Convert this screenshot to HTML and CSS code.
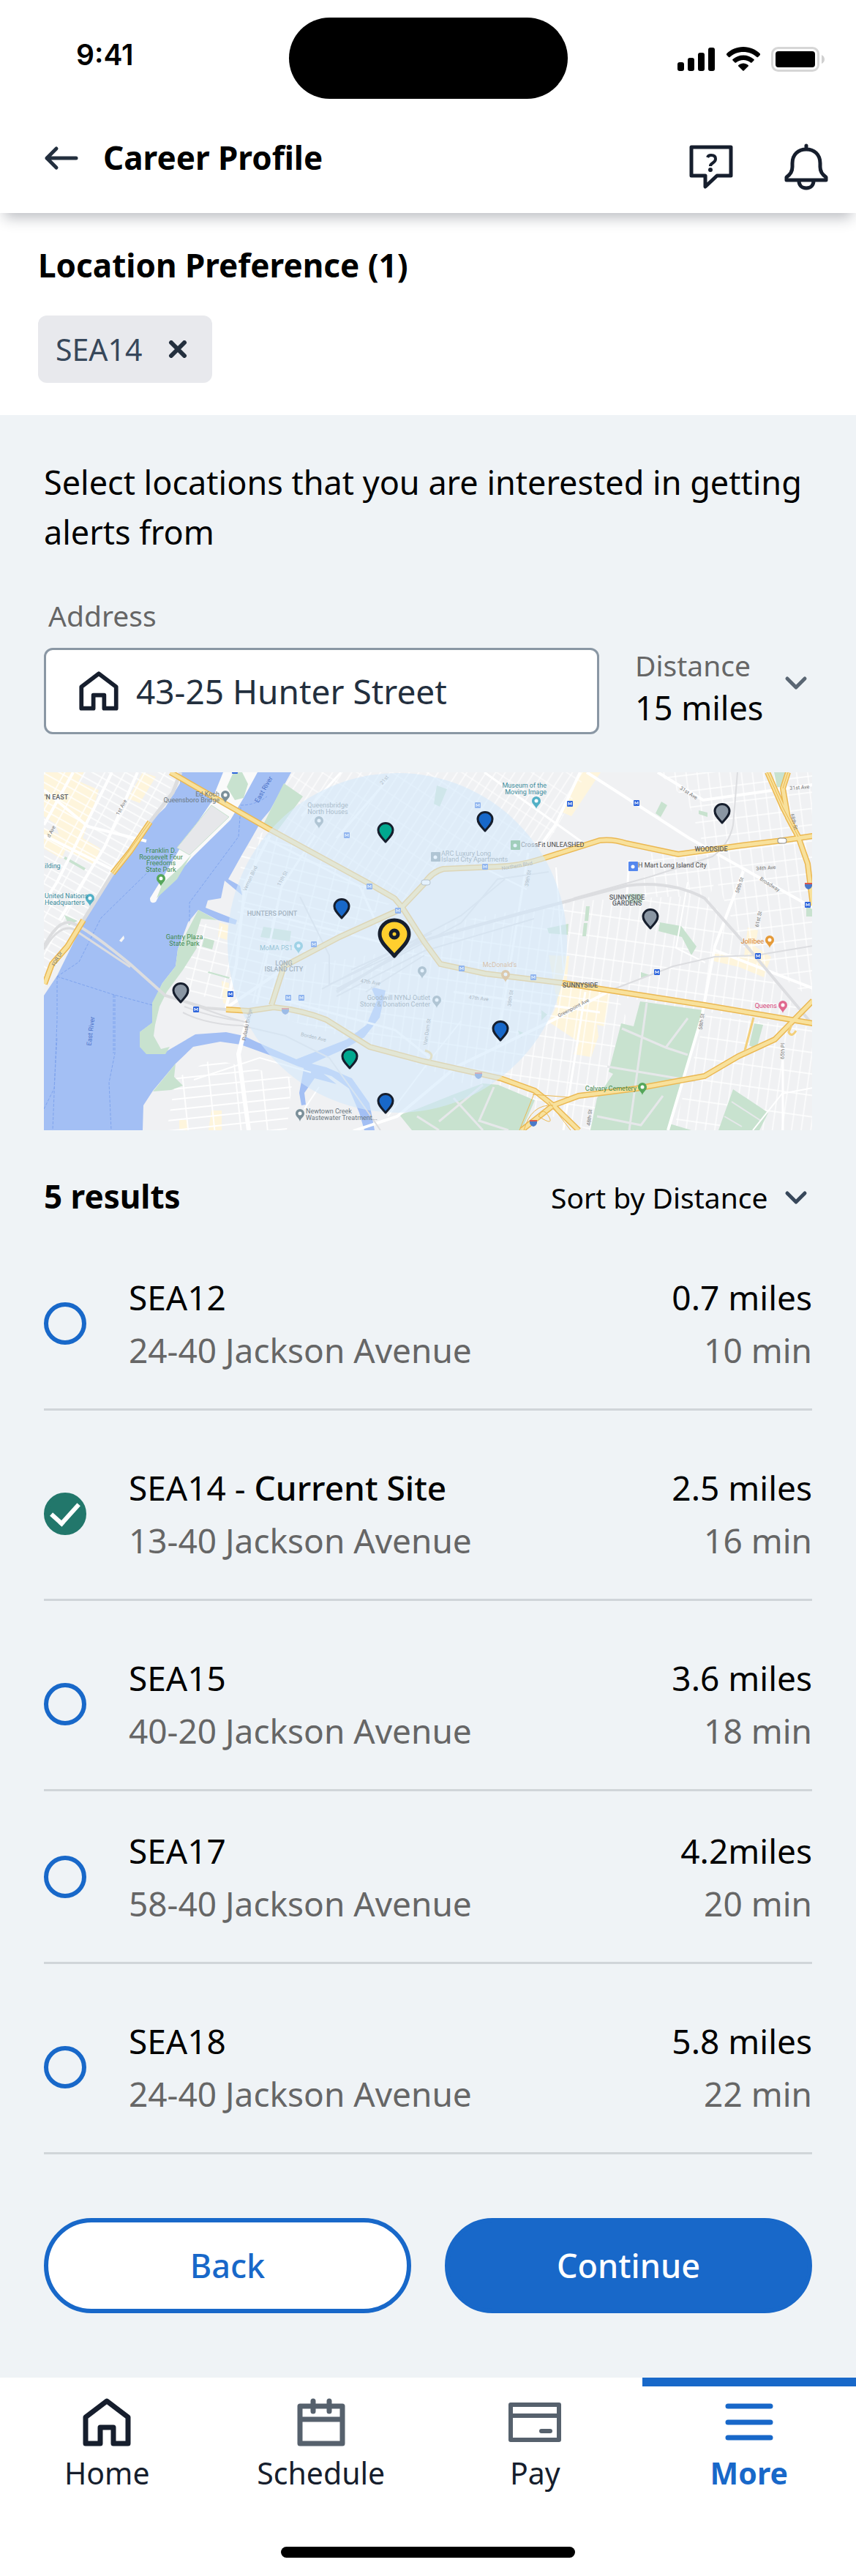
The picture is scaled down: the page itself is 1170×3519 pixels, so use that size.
FILE: index.html
```html
<!DOCTYPE html>
<html lang="en">
<head>
    <meta charset="UTF-8">
    <meta name="viewport" content="width=device-width, initial-scale=1.0">
    <title>Career Profile</title>
    <link rel="stylesheet" href="styles.css">
</head>
<body>
    <header class="header">
        <div class="status-bar">
            <div class="time">9:41</div>
            <div class="island"></div>
            <div class="status-icons">
                <svg width="52" height="34" viewBox="0 0 52 34">
                    <rect x="0" y="21" width="9" height="12" rx="3"/>
                    <rect x="14" y="15" width="9" height="18" rx="3"/>
                    <rect x="28" y="8" width="9" height="25" rx="3"/>
                    <rect x="42" y="1" width="9" height="32" rx="3"/>
                </svg>
                <svg width="46" height="34" viewBox="0 0 46 34">
                    <path d="M23 0C14 0 6 3.500 0 9.500q-.6.8 0 1.500l3 3q.8.6 1.500 0C9.500 9.500 16 7 23 7s13.500 2.500 18.500 7q.8.6 1.500 0l3-3q.6-.8 0-1.500C40 3.500 32 0 23 0z"/>
                    <path d="M23 11.500c-5.500 0-10.500 2-14.500 5.500q-.8.8 0 1.500l3 3q.8.7 1.500 0c3-2.300 6-3.500 10-3.500s7 1.200 10 3.500q.7.7 1.500 0l3-3q.8-.7 0-1.500c-4-3.500-9-5.500-14.500-5.500z"/>
                    <path d="M23 22.500c-2.600 0-4.800 1-6.700 2.500q-.6.8 0 1.500l6 6q.7.6 1.400 0l6-6q.6-.7 0-1.500c-1.900-1.500-4.100-2.500-6.700-2.500z"/>
                </svg>
                <svg width="74" height="34" viewBox="0 0 74 34">
                    <rect x="1.500" y="1.500" width="63" height="31" rx="8" fill="none" stroke="#d6d6d6" stroke-width="3"/>
                    <rect x="6" y="6" width="54" height="22" rx="4"/>
                    <path d="M69 11q4 2 4 6t-4 6z" fill="#d0d0d0"/>
                </svg>
            </div>
        </div>
        <div class="title-bar">
            <a class="back-link" href="#" aria-label="Go back">
                <svg width="48" height="36" viewBox="0 0 48 36" fill="none" stroke="#232f3e" stroke-width="5" stroke-linecap="round" stroke-linejoin="round">
                    <path d="M17 5L4 18l13 13M4 18h40"/>
                </svg>
            </a>
            <h1>Career Profile</h1>
            <button class="icon-button" aria-label="Help">
                <svg width="60" height="66" viewBox="0 0 60 66" fill="none" stroke="#161e2d" stroke-width="5" stroke-linejoin="round">
                    <path d="M3 5h54v39H38L22 59V44H3z"/>
                    <path d="M25 19q1-3 5-3 6 0 6 5 0 3-3 5T29 30v1" stroke-width="4"/>
                    <circle cx="29" cy="36" r="3" fill="#161e2d" stroke="none"/>
                </svg>
            </button>
            <button class="icon-button" aria-label="Notifications">
                <svg width="60" height="66" viewBox="0 0 60 66" fill="none" stroke="#161e2d" stroke-width="5" stroke-linejoin="round" stroke-linecap="round">
                    <path d="M30 3v5M3 50v-4c6-4 8-8 8-14v-5C11 15 19 8 30 8s19 7 19 19v5c0 6 2 10 8 14v4zM20 51c0 6 4 10 10 10s10-4 10-10"/>
                </svg>
            </button>
        </div>
    </header>

    <section class="preference">
        <h2>Location Preference (1)</h2>
        <button class="chip">
            SEA14
            <svg width="26" height="24" viewBox="0 0 26 24" stroke="#232f3e" stroke-width="6" stroke-linecap="round">
                <path d="M4 3l18 18M22 3L4 21"/>
            </svg>
        </button>
    </section>

    <main class="content">
        <p class="intro">Select locations that you are interested in getting alerts from</p>

        <div class="filters">
            <div class="address">
                <label for="address">Address</label>
                <div class="address-box">
                    <svg width="54" height="54" viewBox="0 0 66 66" fill="none" stroke="#161e2d" stroke-width="7" stroke-linejoin="round">
                        <path d="M33 4L4 26v36h20V40h18v22h20V26z"/>
                    </svg>
                    <input type="text" id="address" value="43-25 Hunter Street">
                </div>
            </div>
            <div class="distance">
                <div class="distance-field">
                    <label for="distance">Distance</label>
                    <select id="distance">
                        <option>15 miles</option>
                        <option>25 miles</option>
                    </select>
                </div>
                <svg class="chevron" width="32" height="20" viewBox="0 0 32 20" fill="none" stroke="#5a6673" stroke-width="5" stroke-linecap="round" stroke-linejoin="round">
                    <path d="M4 4l12 12L28 4"/>
                </svg>
            </div>
        </div>

        <svg class="map" viewBox="0 0 1050 489" role="img" aria-label="Map of nearby sites">
            <defs>
                <!-- street grids, one per neighbourhood -->
                <pattern id="grid-manhattan" width="24" height="11" patternUnits="userSpaceOnUse" patternTransform="rotate(29)">
                    <path d="M0 1h24M1 0v11" stroke="#fff" stroke-width="1.500"/>
                </pattern>
                <pattern id="grid-astoria" width="11" height="26" patternUnits="userSpaceOnUse" patternTransform="rotate(33)">
                    <path d="M0 1h11M1 0v26" stroke="#fff" stroke-width="1.200"/>
                </pattern>
                <pattern id="grid-hunters" width="22" height="15" patternUnits="userSpaceOnUse" patternTransform="rotate(14)">
                    <path d="M0 1h22M1 0v15" stroke="#fff" stroke-width="1.500"/>
                </pattern>
                <pattern id="grid-sunnyside" width="13" height="29" patternUnits="userSpaceOnUse" patternTransform="rotate(8)">
                    <path d="M0 1h13M1 0v29" stroke="#fff" stroke-width="1.300"/>
                </pattern>
                <pattern id="grid-woodside" width="15" height="22" patternUnits="userSpaceOnUse" patternTransform="rotate(-7)">
                    <path d="M0 1h15M1 0v22" stroke="#fff" stroke-width="1.300"/>
                </pattern>
                <pattern id="grid-greenpoint" width="36" height="14" patternUnits="userSpaceOnUse" patternTransform="rotate(-6)">
                    <path d="M0 1h36M1 0v14" stroke="#fff" stroke-width="1.800"/>
                </pattern>
                <path id="pin" d="M0-2C-5-8-10-12-10-18a10 9.500 0 0 1 20 0C10-12 5-8 0-2z" stroke="#161e2d" stroke-width="3" stroke-linejoin="round"/>
                <g id="poi">
                    <path d="M0 0C-1-5-6-6-6-11a6 6 0 0 1 12 0C6-6 1-5 0 0z"/>
                    <circle cx="0" cy="-11" r="2.500" fill="#fff"/>
                </g>
                <g id="metro">
                    <rect x="-4" y="-4" width="8" height="8" rx="1" fill="#2f66dc"/>
                    <path d="M-2 2v-4l2 3 2-3v4" fill="none" stroke="#fff"/>
                </g>
                <g id="shop">
                    <rect x="-6" y="-7" width="13" height="13" rx="1"/>
                    <circle cx="0" cy="0" r="2.500" fill="#fff"/>
                </g>
                <g id="shield">
                    <path d="M-5-4H5V0q-1 4-5 5-4-1-5-5z" fill="#4a78c8"/>
                    <path d="M-5-4H5v2H-5z" fill="#d9594c"/>
                </g>
            </defs>

            <rect width="1050" height="489" fill="#f0f1f3"/>

            <!-- commercial blocks -->
            <g fill="#fef5dc">
                <path d="M0 0h55l-8 12 28 12-12 38-10 28 24 14-8 22-40-20-14-36-15-10zM0 76l36 16-12 26-24-14z"/>
                <path d="M135 0l18 6-22 36-16-6zM240 205l12 4-2 20-12-4zM243 285l10 3-2 30-6-3z"/>
                <path d="M733 0h28l-40 60-14-6zM690 250l28 1-4 40 60 12-8 44-10-2 2 16-10 28-24-4 8-16-42-28 12-24z"/>
                <path d="M962 212l14 4-4 22 22 14-10 28-34-14-34-8-3-12 44 6z"/>
                <path d="M185 475h12v14h-12zM229 462h14v27h-18z"/>
            </g>

            <g fill="url(#grid-manhattan)"><path d="M0 0h186l-41 68-51 70-40 64-54 90z"/></g>
            <g fill="url(#grid-astoria)"><path d="M338 0h404l-54 100-68 25-74 6-56 45-190-100z"/></g>
            <g fill="url(#grid-hunters)"><path d="M270 112l32-34 180 96-154 91-17 53-112-14-10-50 14-50 60 10z"/></g>
            <g fill="url(#grid-sunnyside)">
                <path d="M540 208l177-32 190-8 50 72 94 105-150-18-278-50-80-15z"/>
                <path d="M330 268l190-30 24 26 238 38 18 42-54 145-186-69-115-48-120-36z"/>
                <path d="M905 332l146 16v141H860z"/>
            </g>
            <g fill="url(#grid-woodside)"><path d="M839 0h211v310l-94-70-40-100-36-100z"/><path d="M820 110h110l-20 60h-90z"/></g>
            <g fill="url(#grid-greenpoint)"><path d="M180 418l50-26 110 25-8 72H168z"/></g>

            <!-- water -->
            <path class="water" d="M186 0v15l-20 33-21 20-51 70-40 67-36 73-18 27v184h135l1-34 13-20 31-37 24-23 37-7 28 4 55 20 24 10 45 13 24 17 14 33 7 24h14l-7-37-24-34-35-15-20-5 45-20 27-16 21-27 8-37-20-5 8 19-14 33-27 20-69 27-55-24-17-8-24-5-42 3-41 24-11 3-24-10v-20l18-13v-27l13-27 18-23 3-23 14-37 14-17 27 14 24 6 2-6-43-17 3-10 18-3 5-24 24 20-3-13-16-9 19-34 14-24 13-23 11-13L338 0z"/>
            <path class="water" d="M356 400l-7 38 3 17 6-1-2-16 14-20 30 8-20-16z"/>
            <path d="M245 0h47l-19 35-18 30-51 50-45 50-6 12q-8 4-8-5l21-34 21-36 41-60z" fill="#fafafa"/>
            <path class="park" d="M250 20l9-20h12l8 16-6 19-12 3zM188 128l14-16-20 34-28 26 8-20z"/>
            <path d="M229 45l24 16-54 52-17-10z" fill="#e6e7ea" stroke="#c8e2cf"/>
            <path d="M106 232l-3-2 6-7 1 4z" fill="#f7f7f7"/>
            <path d="M18 279l78 25 52 14M18 279l0 60-6 150M97 304l0 80-8 40 3 65M95 304l0 80M18 279l30-20 30-60 84-82M269 45q20 0 36-12M269 48l-3 40-67 90v28" class="ferry"/>
            <path d="M0 460l14-28 4-70" class="ferry"/>

            <!-- parks -->
            <path class="park" d="M328 15l26 18-35 47-20-7zM211 188l26 14-22-2-8 25 2 15-19 30-22 30-10 20-6 25-2 15 10 18 12-3-6 10h-26l-9-10v-20l17-13v-27l14-27 18-23 3-23zM219 226l14 4-3 12-14-4zM225 272l29 8-1 2-29-8zM300 211l38 6-2 14-40-6zM149 436l31-38-2 18 12 12-16 6z"/>
            <path class="park" d="M815 313l86 12-16 60-32 104H747l9-44 22-33-6-3 17-66 17 4zM486 468l24-8 50-20 40-15 21 2 50 21-18 41H503zM942 433l48 32-12 24h-56zM842 205l29 5 21 28-7 12-13-25-32-8z"/>
            <path class="park" d="M844 40l8 5-9 16-7-5zM795 166h23v12h-23zM741 183h5l-2 20h-5zM738 206h5l-2 18h-5zM688 213l29-6-1 15-26-2zM998 0h19l-5 20h-10zM971 343l12 2-9 33-10-5zM895 52l12 3v6l-12-4zM537 18l14 5-10 24-8-4zM816 273l12 4-12 4zM680 325l8 6-8 8zM648 353l10 4-6 6zM1042 185h8v12h-8zM855 480l30 9h-32zM29 115l28 16-2 3-28-16zM28 195l18 8-12 6z"/>
            <g fill="none" stroke="#e6e8ea" stroke-width="3">
                <path d="M824 315l-24 174M790 350l60 26 30 10M770 402l120 20M850 376l30-40M756 470l60 12 30-40"/>
                <path d="M560 445l40 44M510 470l30 19M600 427l-60 50M615 430l-20 46 40 13"/>
                <path d="M940 450l40 26M930 470l24 14" stroke-width="2"/>
            </g>

            <!-- streets -->
            <g fill="none" stroke="#fff" stroke-width="4">
                <path d="M128 0L83 102 21 202M0 24l60 50 80 20M40 0l-40 72M93 0L18 150 0 178M0 86l100 50"/>
                <path d="M742 0l140 90 169 95M839 0l62 38 150-21M733 0l-34 72-20 28M956 135l-39 103-18 97-46 154M1051 295l-134-52"/>
                <path d="M278 338l-12 47 14 104" stroke-width="6"/>
                <path d="M249 322l82-56M771 300l-82 42-125 60-81 68-60 20M249 322l14-60 12-110 34-66"/>
                <path d="M406 0l-54 60M470 10l-70 80M602 0l140 100M302 90l130 66 40 90M272 185l200 50M291 316l34-160 46-70M330 312l150 40 50 40M560 300l200 28M662 110l-42 260M740 300l-30 189M1010 370v119M800 120l-4 60" stroke-width="3"/>
                <path d="M969 489l40-50 42-8M205 420l90-30 70 20M356 460l20-30M470 470l60-80 40-50M600 130l60 30M880 150l-16 90 40 20M700 130l10 140" stroke-width="2"/>
            </g>

            <!-- railways -->
            <g fill="none" stroke="#dcdde0" stroke-width="2">
                <path d="M400 300L510 232l143-40 143-37q60-8 107 17l53 60 95 113" stroke-width="4"/>
                <path d="M400 306l120-62 150-44M390 290l130-60 110-30 90-24M380 296l190-100 60-50M400 296l170-90 50-60 70-10M948 0l-6 72q-5 26-28 43l-83 27-107 30M774 298l86-33 57-13 57-2 77-13M420 270l110-50M440 300l80-50"/>
                <path d="M190 328q30 16 80 18l60 14 60 30 50 70 20 29M192 320q40 16 80 20M200 316q40 16 78 26M390 290v-40l-40-80"/>
            </g>
            <g fill="none" stroke="#dcdddf" stroke-width="5">
                <path d="M187 0l-11 28-31 40M94 138l-40 64"/>
                <path d="M0 238q18-34 34-33t84 57l48 43 55 17 28 2" stroke-width="4"/>
                <path d="M0 242q20-34 40-28l78 52" stroke-width="3"/>
            </g>

            <!-- highways -->
            <g fill="none" stroke="#ebb852" stroke-width="8">
                <path id="hw1" d="M173 0l134 77 134 73 38 22 11 13 30 47 22 30 61 13 107 13 64 10 129 20 148 25"/>
                <path id="hw2" d="M311 318l17-53 76-40 82-37 34-36q10-16 26-20l71-3q30 0 64-11l79-25q18-2 36 4l71 15 86-12 57-7 41-6"/>
                <path id="hw3" d="M249 324l31 2 34-5q40 4 72 17l59 37 75 20 104 23 47 17 25 20 35 34"/>
                <path id="hw4" d="M653 489l43-34 35-13 79-10 93-17 46-27 50-23 52-53"/>
                <path id="hw5" d="M989 0l21 48 21 40 13 37 7 57M1017 0l-7 22 7 40 14 26"/>
                <path id="hw6" d="M145 68l-27 40-24 30M54 202l-22 36-21 24-10 27"/>
            </g>
            <g fill="none" stroke="#f8e19c" stroke-width="5">
                <use href="#hw1"/><use href="#hw2"/><use href="#hw3"/><use href="#hw4"/><use href="#hw5"/><use href="#hw6"/>
            </g>
            <g fill="none" stroke="#ebb852" stroke-width="1">
                <path d="M989 0l21 48 21 40M1017 0l-7 22M145 68l-51 70M650 489l20-50M656 489q10-36 40-34M690 450l30 39M676 470q6-14 14 0t-14 0M668 440l50 4"/>
            </g>
            <path d="M958 380l12-45M1022 345l-4 10q4 8 10-2M521 380q14 4 6 14" fill="none" stroke="#f3cf7a" stroke-width="3"/>

            <g>
                <use href="#shield" x="330" y="326"/><use href="#shield" x="594" y="414"/><use href="#shield" x="669" y="479"/><use href="#shield" x="1045" y="155"/>
            </g>
            <g fill="#fff" stroke="#888">
                <rect x="1003" y="90" width="12" height="7" rx="3"/>
                <rect x="516" y="147" width="12" height="7" rx="3"/>
            </g>
            <g>
                <use href="#metro" x="414" y="86"/><use href="#metro" x="445" y="156"/><use href="#metro" x="484" y="189"/>
                <use href="#metro" x="369" y="235"/><use href="#metro" x="255" y="303"/><use href="#metro" x="334" y="308"/>
                <use href="#metro" x="352" y="308"/><use href="#metro" x="208" y="324"/><use href="#metro" x="593" y="45"/>
                <use href="#metro" x="719" y="43"/><use href="#metro" x="810" y="42"/><use href="#metro" x="603" y="129"/>
                <use href="#metro" x="571" y="268"/><use href="#metro" x="669" y="280"/><use href="#metro" x="838" y="273"/>
                <use href="#metro" x="1044" y="181"/><use href="#metro" x="976" y="251"/><use href="#metro" x="261" y="-2"/>
            </g>
            <g fill="#7b8f99">
                <use href="#poi" x="248" y="42"/><use href="#poi" x="376" y="77"/><use href="#poi" x="350" y="477"/>
                <use href="#poi" x="517" y="282"/><use href="#poi" x="537" y="322"/><use href="#shop" x="535" y="116"/>
            </g>
            <g fill="#52b0c6"><use href="#poi" x="63" y="183"/><use href="#poi" x="348" y="248"/><use href="#poi" x="673" y="50"/></g>
            <g fill="#55a65a"><use href="#poi" x="160" y="156"/><use href="#poi" x="818" y="441"/><use href="#shop" x="644" y="100"/></g>
            <g fill="#e59a38"><use href="#poi" x="992" y="240"/><use href="#poi" x="631" y="287"/></g>
            <use href="#poi" x="1010" y="329" fill="#e0698f"/>
            <use href="#shop" x="805" y="129" fill="#5487ee"/>

            <g class="label">
                <text x="240" y="33" class="end">Ed Koch</text>
                <text x="240" y="41" class="end">Queensboro Bridge</text>
                <text x="388" y="48" class="mid">Queensbridge</text>
                <text x="388" y="57" class="mid">North Houses</text>
                <text x="528" y="311" class="end">Goodwill NYNJ Outlet</text>
                <text x="528" y="320" class="end">Store &amp; Donation Center</text>
                <text x="358" y="466">Newtown Creek</text>
                <text x="358" y="475">Wastewater Treatment...</text>
                <text x="543" y="114">ARC Luxury Long</text>
                <text x="543" y="122">Island City Apartments</text>
            </g>
            <g class="label dark">
                <text x="652" y="102">CrossFit UNLEASHED</text>
                <text x="812" y="130">H Mart Long Island City</text>
            </g>
            <g class="label green">
                <text x="160" y="110" class="mid">Franklin D.</text>
                <text x="160" y="119" class="mid">Roosevelt Four</text>
                <text x="160" y="127" class="mid">Freedoms</text>
                <text x="160" y="136" class="mid">State Park</text>
                <text x="192" y="228" class="mid">Gantry Plaza</text>
                <text x="192" y="237" class="mid">State Park</text>
                <text x="810" y="435" class="end">Calvary Cemetery</text>
            </g>
            <g class="label teal">
                <text x="1" y="131">ilding</text>
                <text x="1" y="172">United Nations</text>
                <text x="1" y="181">Headquarters</text>
                <text x="340" y="243" class="end">MoMA PS1</text>
                <text x="687" y="21" class="end">Museum of the</text>
                <text x="687" y="30" class="end">Moving Image</text>
            </g>
            <g class="label orange">
                <text x="984" y="234" class="end">Jollibee</text>
                <text x="623" y="266" class="mid">McDonald's</text>
            </g>
            <text x="1002" y="322" class="label pink end">Queens</text>
            <g class="label area">
                <text x="1" y="37">'N EAST</text>
                <text x="312" y="196" class="mid">HUNTERS POINT</text>
                <text x="328" y="264" class="mid">LONG</text>
                <text x="328" y="272" class="mid">ISLAND CITY</text>
                <text x="912" y="108" class="mid">WOODSIDE</text>
                <text x="797" y="174" class="mid">SUNNYSIDE</text>
                <text x="797" y="182" class="mid">GARDENS</text>
                <text x="733" y="294" class="mid">SUNNYSIDE</text>
            </g>
            <g class="label street">
                <text transform="translate(108 49) rotate(-62)">1st Ave</text>
                <text transform="translate(12 82) rotate(-62)">d Ave</text>
                <text transform="translate(20 256) rotate(-60)">FDR Dr</text>
                <text transform="translate(284 146) rotate(-65)">Vernon Blvd</text>
                <text transform="translate(328 146) rotate(-62)">11th St</text>
                <text transform="translate(280 345) rotate(-78)">Pulaski Bridge</text>
                <text transform="translate(446 289) rotate(8)">47th Ave</text>
                <text transform="translate(368 364) rotate(13)">Borden Ave</text>
                <text transform="translate(467 12) rotate(-50)">21st</text>
                <text transform="translate(647 130) rotate(-10)">Northern Blvd</text>
                <text transform="translate(664 145) rotate(-80)">39th St</text>
                <text transform="translate(640 309) rotate(-82)">39th St</text>
                <text transform="translate(594 311) rotate(6)">47th Ave</text>
                <text transform="translate(526 355) rotate(-82)">Van Dam St</text>
                <text transform="translate(725 324) rotate(-28)">Greenpoint Ave</text>
                <text transform="translate(748 472) rotate(-83)">48th St</text>
                <text transform="translate(901 341) rotate(-82)">58th St</text>
                <text transform="translate(953 155) rotate(-72)">58th St</text>
                <text transform="translate(979 201) rotate(-78)">61st St</text>
                <text transform="translate(1012 381) rotate(-88)">65th Pl</text>
                <text transform="translate(1023 68) rotate(75)">68th St</text>
                <text transform="translate(991 155) rotate(32)">Broadway</text>
                <text transform="translate(987 133) rotate(-4)">34th Ave</text>
                <text transform="translate(880 30) rotate(33)">31st Ave</text>
                <text transform="translate(1033 23) rotate(-4)">31st Ave</text>
            </g>
            <g class="label river">
                <text transform="translate(303 25) rotate(-60)">East River</text>
                <text transform="translate(67 354) rotate(-83)">East River</text>
            </g>

            <!-- search radius -->
            <circle cx="483" cy="233" r="232" fill="#d4eafb" opacity=".6"/>

            <g fill="#00a88f"><use href="#pin" x="467" y="97"/><use href="#pin" x="418" y="406"/></g>
            <g fill="#1868c9">
                <use href="#pin" x="407" y="201"/><use href="#pin" x="467" y="467"/>
                <use href="#pin" x="603" y="82"/><use href="#pin" x="624" y="368"/>
            </g>
            <g fill="#8a96a3"><use href="#pin" x="187" y="316"/><use href="#pin" x="927" y="71"/><use href="#pin" x="829" y="215"/></g>
            <path d="M479 251c-7-9-20-18-20-30a20 19 0 0 1 40 0c0 12-13 21-20 30z" fill="#ffcf2e" stroke="#161e2d" stroke-width="5" stroke-linejoin="round"/>
            <circle cx="479" cy="221" r="5" fill="#ffcf2e" stroke="#161e2d" stroke-width="5"/>
        </svg>

        <div class="results-bar">
            <h2>5 results</h2>
            <div class="sort">
                <select aria-label="Sort results">
                    <option>Sort by Distance</option>
                    <option>Sort by Name</option>
                </select>
                <svg class="chevron" width="32" height="20" viewBox="0 0 32 20" fill="none" stroke="#37475a" stroke-width="5" stroke-linecap="round" stroke-linejoin="round">
                    <path d="M4 4l12 12L28 4"/>
                </svg>
            </div>
        </div>

        <div class="sites">
            <label class="site">
                <input type="radio" name="site">
                <span class="site-name">SEA12<small>24-40 Jackson Avenue</small></span>
                <span class="site-distance">0.7 miles<small>10 min</small></span>
            </label>
            <label class="site">
                <input type="radio" name="site" checked>
                <span class="site-name">SEA14 - <b>Current Site</b><small>13-40 Jackson Avenue</small></span>
                <span class="site-distance">2.5 miles<small>16 min</small></span>
            </label>
            <label class="site">
                <input type="radio" name="site">
                <span class="site-name">SEA15<small>40-20 Jackson Avenue</small></span>
                <span class="site-distance">3.6 miles<small>18 min</small></span>
            </label>
            <label class="site site-compact">
                <input type="radio" name="site">
                <span class="site-name">SEA17<small>58-40 Jackson Avenue</small></span>
                <span class="site-distance">4.2miles<small>20 min</small></span>
            </label>
            <label class="site">
                <input type="radio" name="site">
                <span class="site-name">SEA18<small>24-40 Jackson Avenue</small></span>
                <span class="site-distance">5.8 miles<small>22 min</small></span>
            </label>
        </div>

        <div class="actions">
            <button class="button">Back</button>
            <button class="button button-primary">Continue</button>
        </div>
    </main>

    <nav class="tabs">
        <a href="#" class="tab">
            <svg width="66" height="66" viewBox="0 0 66 66" fill="none" stroke="#161e2d" stroke-width="7" stroke-linejoin="round">
                <path d="M33 4L4 26v36h20V40h18v22h20V26z"/>
            </svg>
            Home
        </a>
        <a href="#" class="tab">
            <svg width="66" height="66" viewBox="0 0 66 66" fill="none" stroke="#56616d" stroke-width="7" stroke-linejoin="round" stroke-linecap="round">
                <path d="M4 11h58v51H4zM4 29h58M22 4v14M44 4v14"/>
            </svg>
            Schedule
        </a>
        <a href="#" class="tab">
            <svg width="72" height="66" viewBox="0 0 72 66" fill="none" stroke="#56616d" stroke-width="6" stroke-linejoin="round" stroke-linecap="round">
                <path d="M3 9h66v48H3zM3 24h66M45 45h12"/>
            </svg>
            Pay
        </a>
        <a href="#" class="tab active">
            <svg width="66" height="66" viewBox="0 0 66 66" fill="none" stroke="#1868c9" stroke-width="7" stroke-linecap="round">
                <path d="M4 11h58M4 33h58M4 54h58"/>
            </svg>
            More
        </a>
    </nav>
    <div class="home-indicator"></div>
</body>
</html>
```

FILE: styles.css
```css
* {
    box-sizing: border-box;
}

body {
    margin: 0;
    background-color: #fff;
    color: #000;
    font-family: "Noto Sans", "Open Sans", sans-serif;
    font-size: 45px;
    line-height: 72px;
}

h1,
h2,
p {
    margin: 0;
}

h1,
h2 {
    font-size: 44px;
    font-weight: 700;
    line-height: 60px;
}

button,
input,
select {
    font: inherit;
    color: inherit;
    margin: 0;
    padding: 0;
    border: 0;
    background: none;
}

select {
    appearance: none;
    cursor: pointer;
}

svg {
    display: block;
    flex: none;
}

/* Header */
.header {
    height: 291px;
    background-color: #fff;
    box-shadow: 0 12px 18px -6px rgba(22, 30, 45, 0.3);
}

.status-bar {
    display: grid;
    grid-template-columns: 1fr 381px 1fr;
    padding-top: 24px;
}

.time {
    padding: 18px 0 0 104px;
    font-family: Inter, "Liberation Sans", sans-serif;
    font-size: 39px;
    font-weight: 600;
    line-height: 66px;
}

.island {
    height: 111px;
    border-radius: 56px;
    background-color: #000;
}

.status-icons {
    display: flex;
    justify-content: flex-end;
    gap: 15px;
    padding: 40px 42px 0 0;
}

.title-bar {
    display: flex;
    align-items: flex-start;
    padding: 50px 38px 0 60px;
}

.back-link {
    padding-top: 13px;
}

.title-bar h1 {
    flex: 1;
    margin-left: 33px;
}

.icon-button {
    margin: 11px 0 0 70px;
    cursor: pointer;
}

/* Selected locations */
.preference {
    padding: 41px 52px 44px;
}

.chip {
    display: flex;
    align-items: center;
    gap: 36px;
    height: 92px;
    margin-top: 39px;
    padding: 0 34px 0 24px;
    border-radius: 12px;
    background-color: #e8e9ed;
    color: #37475a;
    font-size: 41px;
    cursor: pointer;
}

/* Main content */
.content {
    padding: 58px 60px 88px;
    background-color: #eff3f6;
}

.intro {
    line-height: 68px;
}

.filters {
    display: flex;
    align-items: flex-end;
    gap: 49px;
    margin-top: 52px;
}

.filters label {
    display: block;
    color: #666;
    font-size: 39px;
    line-height: 56px;
}

.address {
    flex: 1;
    min-width: 0;
}

.address > label {
    padding-left: 6px;
}

.address-box {
    display: flex;
    align-items: center;
    gap: 24px;
    height: 118px;
    margin-top: 16px;
    padding: 0 45px;
    border: 3px solid #8a97a4;
    border-radius: 12px;
    background-color: #fff;
    color: #232f3e;
    font-size: 46px;
}

.address-box input {
    flex: 1;
    min-width: 0;
    outline: none;
}

.distance {
    display: flex;
    align-items: center;
    width: 242px;
    height: 128px;
}

.distance-field {
    flex: 1;
}

.distance select {
    display: block;
    height: 60px;
    line-height: 60px;
}

.distance .chevron {
    margin: 0 6px 12px 0;
}

/* Map */
.map {
    width: 100%;
    height: auto;
    margin-top: 52px;
}

.water {
    fill: #a3bff4;
}

.park {
    fill: #c8e2cf;
}

.ferry {
    fill: none;
    stroke: #7fa4ee;
    stroke-dasharray: 4 2;
}

.label {
    fill: #6b7780;
    font-family: Roboto, sans-serif;
    font-size: 9px;
}

.label .mid,
.street text,
.river text {
    text-anchor: middle;
}

.end {
    text-anchor: end;
}

.dark {
    fill: #4a4a4a;
}

.green {
    fill: #3f8a4f;
}

.teal {
    fill: #3a8c9c;
}

.orange {
    fill: #d9822b;
}

.pink {
    fill: #d9487a;
}

.area {
    fill: #5a5f66;
    font-weight: 500;
}

.street {
    fill: #777;
    font-size: 7px;
}

.river {
    fill: #4c72c8;
}

/* Results */
.results-bar {
    display: flex;
    align-items: baseline;
    justify-content: space-between;
    height: 72px;
    margin: 60px 0 0;
}

.sort {
    display: flex;
    align-items: center;
    gap: 22px;
    padding-right: 6px;
    font-size: 39px;
    line-height: 60px;
}

.site {
    display: flex;
    align-items: center;
    padding: 69px 0 44px;
    border-bottom: 3px solid #d0d5d9;
    font-size: 46px;
    cursor: pointer;
}

.site:first-child {
    padding-top: 60px;
}

.site-compact {
    padding-top: 45px;
}

.site input {
    appearance: none;
    flex: none;
    display: grid;
    place-items: center;
    width: 58px;
    height: 58px;
    margin-right: 58px;
    border: 6px solid #1868c9;
    border-radius: 50%;
    cursor: pointer;
}

.site input:checked {
    border-color: #22776b;
    background-color: #22776b;
}

/* Tick mark */
.site input:checked::after {
    content: "";
    width: 16px;
    height: 32px;
    margin-bottom: 8px;
    border: solid #fff;
    border-width: 0 6px 6px 0;
    transform: rotate(42deg);
}

.site-name {
    flex: 1;
}

.site-distance {
    text-align: right;
}

.site small {
    display: block;
    color: #666;
    font-size: inherit;
}

.site b {
    font-weight: 500;
}

.actions {
    display: grid;
    grid-template-columns: 1fr 1fr;
    gap: 46px;
    margin-top: 87px;
}

.button {
    height: 130px;
    border: 6px solid #1868c9;
    border-radius: 65px;
    background-color: #fff;
    color: #1868c9;
    font-weight: 500;
    cursor: pointer;
}

.button-primary {
    background-color: #1868c9;
    color: #fff;
}

/* Bottom tabs */
.tabs {
    display: grid;
    grid-template-columns: repeat(4, 1fr);
}

.tab {
    display: flex;
    flex-direction: column;
    align-items: center;
    gap: 6px;
    padding-top: 16px;
    border-top: 12px solid transparent;
    color: #161e2d;
    font-size: 41px;
    line-height: 60px;
    text-decoration: none;
}

.active {
    border-top-color: #1868c9;
    color: #1868c9;
    font-weight: 700;
}

.home-indicator {
    width: 402px;
    height: 15px;
    margin: 71px auto 24px;
    border-radius: 8px;
    background-color: #000;
}
```
